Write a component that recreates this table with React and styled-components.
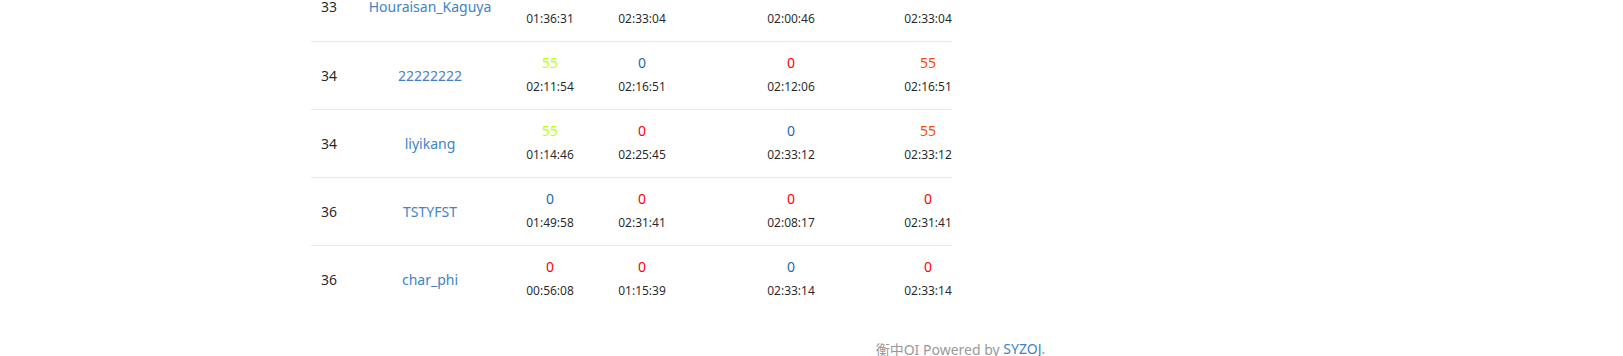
import React from 'react'
import styled, { createGlobalStyle } from 'styled-components'

const GlobalStyle = createGlobalStyle`
  html, body {
    background: #fff;
    height: 356px;
    margin: 0;
    overflow: hidden;
  }

  body {
    color: rgba(0, 0, 0, 0.87);
    font-family: 'Noto Sans', 'Noto Sans CJK SC', sans-serif;
    font-size: 14px;
  }
`

const Page = styled.div`
  display: flex;
  flex-direction: column;
  margin-top: -27px;
`

const Board = styled.table`
  border-collapse: collapse;
  margin-left: 311px;
  table-layout: fixed;
  width: 641px;
`

const Row = styled.tr`
  border-top: ${p => (p.$first ? 'none' : '1px solid #e8e8e8')};
  height: 68px;
`

const RankCell = styled.td`
  padding: 0 0 0 10px;
  vertical-align: middle;
  width: 45px;
`

const NameCell = styled.td`
  padding: 0;
  text-align: center;
  vertical-align: middle;
  width: ${p => p.$w}px;

  a {
    color: #4183c4;
    text-decoration: none;
  }
`

const ScoreCell = styled.td`
  padding: 0;
  text-align: center;
  vertical-align: middle;
  width: ${p => p.$w}px;
`

const Score = styled.div`
  color: ${p => p.$color};
  font-size: 14px;
  line-height: 20px;
`

const Time = styled.div`
  font-size: 12px;
  line-height: 20px;
  margin-top: 4px;
`

const Footer = styled.div`
  color: #999;
  display: flex;
  font-size: 14px;
  justify-content: center;
  margin-top: 26px;
  padding-left: 298px;
  white-space: pre;

  a {
    color: #4183c4;
    text-decoration: none;
  }
`

const colours = {
  y: '#c3ff00',
  r: '#ff0000',
  b: '#1f66b4',
  o: '#ff4b00',
}

const widths = [112, 72, 226, 48]

const rows = [
  {
    rank: 33,
    name: 'Houraisan_Kaguya',
    cells: [
      ['0', 'b', '01:36:31'],
      ['0', 'b', '02:33:04'],
      ['0', 'b', '02:00:46'],
      ['0', 'b', '02:33:04'],
    ],
  },
  {
    rank: 34,
    name: '22222222',
    cells: [
      ['55', 'y', '02:11:54'],
      ['0', 'b', '02:16:51'],
      ['0', 'r', '02:12:06'],
      ['55', 'o', '02:16:51'],
    ],
  },
  {
    rank: 34,
    name: 'liyikang',
    cells: [
      ['55', 'y', '01:14:46'],
      ['0', 'r', '02:25:45'],
      ['0', 'b', '02:33:12'],
      ['55', 'o', '02:33:12'],
    ],
  },
  {
    rank: 36,
    name: 'TSTYFST',
    cells: [
      ['0', 'b', '01:49:58'],
      ['0', 'r', '02:31:41'],
      ['0', 'r', '02:08:17'],
      ['0', 'r', '02:31:41'],
    ],
  },
  {
    rank: 36,
    name: 'char_phi',
    cells: [
      ['0', 'r', '00:56:08'],
      ['0', 'r', '01:15:39'],
      ['0', 'b', '02:33:14'],
      ['0', 'r', '02:33:14'],
    ],
  },
]

function App() {
  return (
    <Page>
      <GlobalStyle />
      <Board>
        <tbody>
          {rows.map((row, i) => (
            <Row key={row.name} $first={i === 0}>
              <RankCell>{row.rank}</RankCell>
              <NameCell $w={128}>
                <a href="#">{row.name}</a>
              </NameCell>
              {row.cells.map(([score, c, time], j) => (
                <ScoreCell key={j} $w={widths[j]}>
                  <Score $color={colours[c]}>{score}</Score>
                  <Time>{time}</Time>
                </ScoreCell>
              ))}
            </Row>
          ))}
        </tbody>
      </Board>
      <Footer>
        {'衡中OI Powered by '}
        <a href="#">SYZOJ</a>.
      </Footer>
    </Page>
  )
}

export default App
